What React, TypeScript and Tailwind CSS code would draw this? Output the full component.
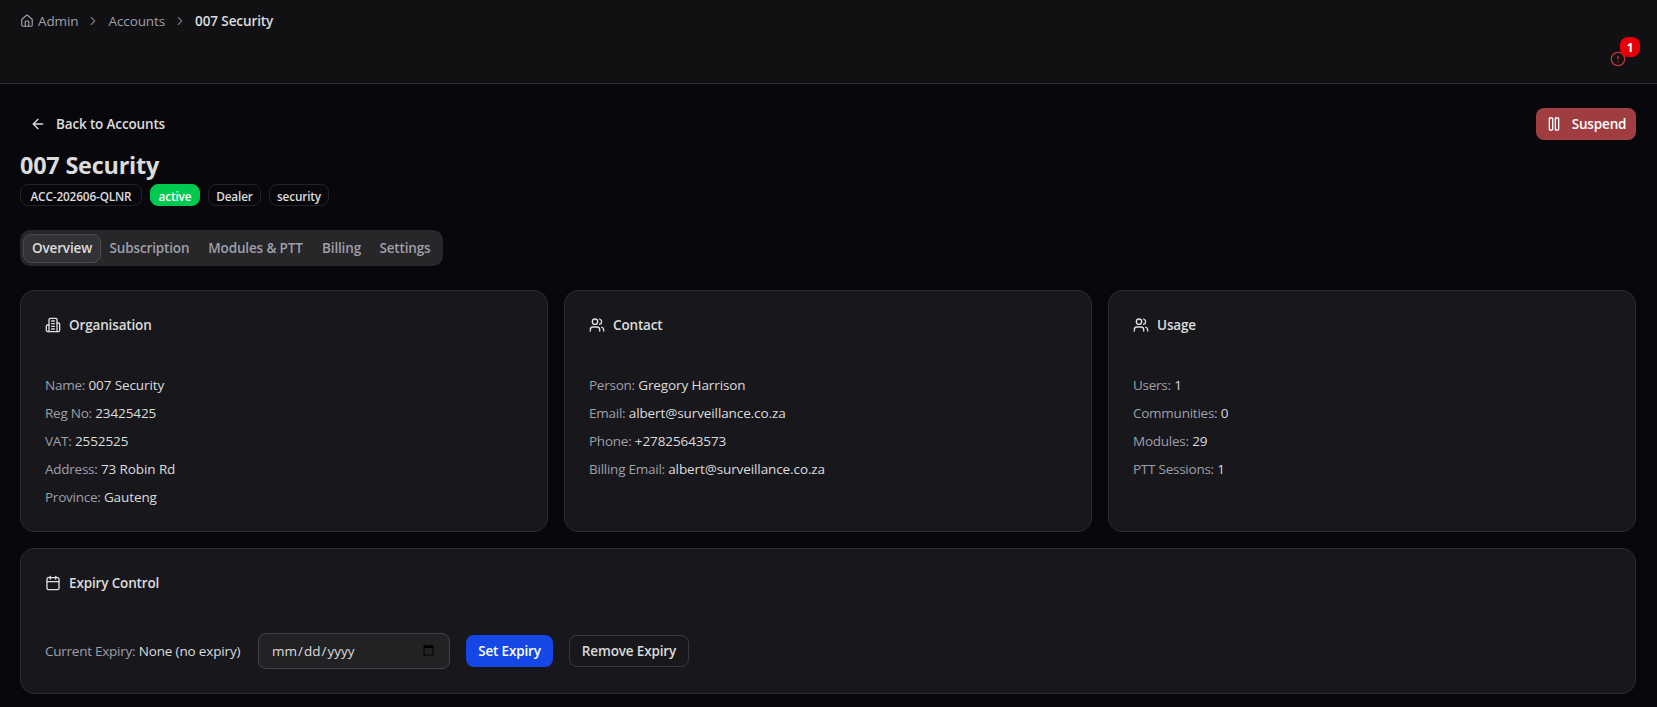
import type { ReactNode } from "react";
import { ArrowLeft, Calendar, ChevronRight, CircleAlert, House, Pause, Users } from "lucide-react";

type Field = { label: string; value: string };

const organisation: Field[] = [
  { label: "Name", value: "007 Security" },
  { label: "Reg No", value: "23425425" },
  { label: "VAT", value: "2552525" },
  { label: "Address", value: "73 Robin Rd" },
  { label: "Province", value: "Gauteng" },
];

const contact: Field[] = [
  { label: "Person", value: "Gregory Harrison" },
  { label: "Email", value: "albert@surveillance.co.za" },
  { label: "Phone", value: "+27825643573" },
  { label: "Billing Email", value: "albert@surveillance.co.za" },
];

const usage: Field[] = [
  { label: "Users", value: "1" },
  { label: "Communities", value: "0" },
  { label: "Modules", value: "29" },
  { label: "PTT Sessions", value: "1" },
];

const tabs = [
  { name: "Overview", width: "w-[78px]" },
  { name: "Subscription", width: "w-[97px]" },
  { name: "Modules & PTT", width: "w-[115px]" },
  { name: "Billing", width: "w-[57px]" },
  { name: "Settings", width: "w-[70px]" },
];

function BuildingIcon() {
  return (
    <svg className="size-4" viewBox="0 0 24 24" fill="none" stroke="currentColor" strokeWidth="2" strokeLinecap="round" strokeLinejoin="round">
      <path d="M6 22V4a2 2 0 0 1 2-2h8a2 2 0 0 1 2 2v18Z" />
      <path d="M6 12H4a2 2 0 0 0-2 2v6a2 2 0 0 0 2 2h2" />
      <path d="M18 9h2a2 2 0 0 1 2 2v9a2 2 0 0 1-2 2h-2" />
      <path d="M10 6h4M10 10h4M10 14h4M10 18h4" />
    </svg>
  );
}

function Card({ icon, title, children }: { icon: ReactNode; title: string; children: ReactNode }) {
  return (
    <section className="rounded-[14px] border border-[#2d2d30] bg-[#18181c] p-6">
      <h2 className="mb-10 flex h-5 items-center gap-2 font-semibold tracking-[-0.15px]">
        {icon}
        {title}
      </h2>
      {children}
    </section>
  );
}

function FieldList({ fields }: { fields: Field[] }) {
  return (
    <div className="space-y-2">
      {fields.map((field) => (
        <p key={field.label}>
          <span className="tracking-[-0.25px] text-[#9f9fa9]">{field.label}:</span> <span className="tracking-[-0.1px]">{field.value}</span>
        </p>
      ))}
    </div>
  );
}

export default function App() {
  const badge = "flex h-[22px] items-center justify-center rounded-lg border pt-px text-[11.8px] font-semibold";

  return (
    <div className="h-[707px] overflow-hidden bg-[#08080c] font-['Open_Sans',sans-serif] text-[13.5px] leading-5 tracking-[-0.15px] text-[#dcdcdc]">
      <header className="flex h-21 flex-col border-b border-[#2d2d30] bg-[#111114] pl-5">
        <nav className="mt-[11px] flex h-5 items-center tracking-[-0.1px] text-[#9f9fa9]">
          <House className="mr-1 size-3.5" />
          <span>Admin</span>
          <ChevronRight className="mx-2 size-3.5 opacity-70" />
          <span>Accounts</span>
          <ChevronRight className="mx-2 size-3.5 opacity-70" />
          <span className="font-semibold text-[#dcdcdc]">007 Security</span>
        </nav>
        <div className="relative mt-5 mr-[31px] size-4 self-end text-[#c0353b]">
          <CircleAlert className="size-4" />
          <span className="absolute -top-[14px] left-[10px] flex size-5 items-center justify-center rounded-lg bg-[#e7000b] text-[11.8px] font-bold text-white">1</span>
        </div>
      </header>

      <main className="pt-6 pr-[21px] pl-5">
        <div className="flex h-8 items-center justify-between">
          <button className="flex h-8 items-center gap-2.5 px-2.5 font-semibold">
            <ArrowLeft className="size-4" />
            Back to Accounts
          </button>
          <button className="flex h-8 w-[100px] items-center justify-center gap-2.5 rounded-lg bg-[#9f3d41] font-semibold text-white">
            <Pause className="size-4" />
            Suspend
          </button>
        </div>

        <h1 className="mt-[9px] text-[23.4px] leading-8 font-bold tracking-[-0.2px]">007 Security</h1>
        <div className="mt-[3px] flex gap-2">
          <span className={`${badge} w-[122px] border-[#232326]`}>ACC-202606-QLNR</span>
          <span className={`${badge} w-[50px] border-[#00c950] bg-[#00c950] text-white`}>active</span>
          <span className={`${badge} w-[53px] border-[#232326]`}>Dealer</span>
          <span className={`${badge} w-[60px] border-[#232326]`}>security</span>
        </div>

        <div className="mt-6 flex h-9 w-fit items-center rounded-[10px] bg-[#27272a] p-[3px]">
          {tabs.map((tab, i) => (
            <button
              key={tab.name}
              className={`h-[29px] rounded-lg border font-semibold whitespace-nowrap ${tab.width} ${i === 0 ? "border-[#4b4b4f] bg-[#333336]" : "border-transparent text-[#9f9fa9]"}`}
            >
              {tab.name}
            </button>
          ))}
        </div>

        <div className="mt-6 grid grid-cols-3 gap-4">
          <Card icon={<BuildingIcon />} title="Organisation">
            <FieldList fields={organisation} />
          </Card>
          <Card icon={<Users className="size-4" />} title="Contact">
            <FieldList fields={contact} />
          </Card>
          <Card icon={<Users className="size-4" />} title="Usage">
            <FieldList fields={usage} />
          </Card>
        </div>

        <div className="mt-4">
          <Card icon={<Calendar className="size-4" />} title="Expiry Control">
            <div className="flex items-center gap-4">
              <p className="w-[197px] whitespace-nowrap">
                <span className="tracking-[-0.25px] text-[#9f9fa9]">Current Expiry:</span> None (no expiry)
              </p>
              <input type="date" className="h-9 w-48 rounded-lg border border-[#434347] bg-[#222225] px-3 tracking-normal" />
              <button className="h-8 w-[87px] rounded-lg bg-[#1447e6] font-semibold text-white">Set Expiry</button>
              <button className="h-8 w-[120px] rounded-lg border border-[#38383b] font-semibold">Remove Expiry</button>
            </div>
          </Card>
        </div>
      </main>
    </div>
  );
}
